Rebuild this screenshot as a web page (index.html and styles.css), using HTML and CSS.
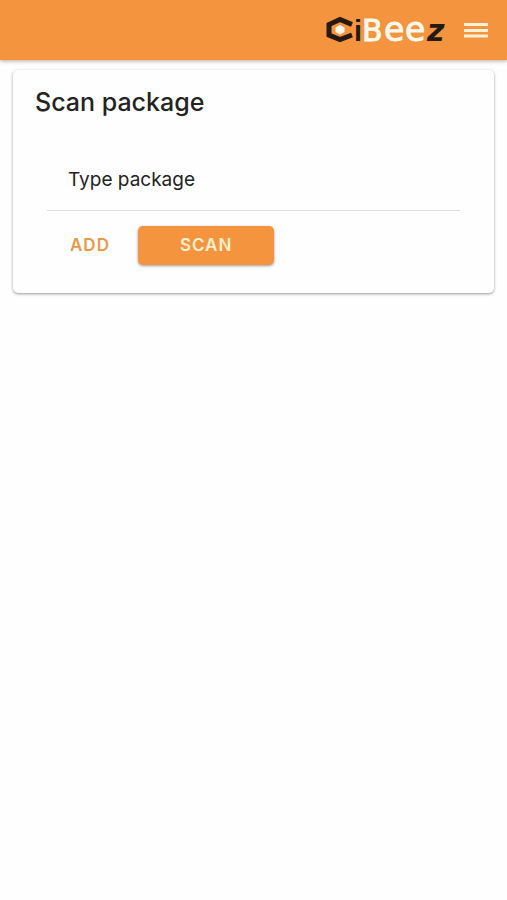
FILE: index.html
```html
<!DOCTYPE html>
<html lang="en">
<head>
  <meta charset="utf-8">
  <meta name="viewport" content="width=device-width, initial-scale=1">
  <title>CiBeez</title>
  <link rel="stylesheet" href="styles.css">
</head>
<body>
  <header class="toolbar">
    <a class="logo" href="#" aria-label="CiBeez">
      <svg class="logo-art" viewBox="0 0 120 32" aria-hidden="true">
        <path class="hex" d="M26 10.5 L14 5.5 L3 10.5 V21 L14 25.5 L26 21"/>
        <path class="cell" d="M14 11 L18.5 13.5 V18 L14 20.5 L9.5 18 V13.5 Z"/>
        <text class="dark narrow" x="28" y="27">i</text>
        <text class="light" x="36" y="27">B</text>
        <text class="light round" x="58" y="27">e</text>
        <text class="light round" x="79" y="27">e</text>
        <text class="dark slant" x="101" y="27">z</text>
      </svg>
    </a>
    <button class="menu" type="button" aria-label="Menu">
      <svg class="menu-art" viewBox="0 0 24 16" aria-hidden="true">
        <path d="M0 2.5H24M0 8.5H24M0 14H24"/>
      </svg>
    </button>
  </header>
  <main class="card">
    <h1 class="title">Scan package</h1>
    <form class="form">
      <input class="field" type="text" placeholder="Type package" aria-label="Type package">
      <div class="actions">
        <button class="button" type="button">ADD</button>
        <button class="button solid" type="button">SCAN</button>
      </div>
    </form>
  </main>
</body>
</html>
```
FILE: styles.css
```css
* {
  box-sizing: border-box;
}

body {
  margin: 0;
  background: #fefefe;
  color: #232323;
  font-family: Inter, "Liberation Sans", sans-serif;
}

.toolbar {
  display: flex;
  align-items: center;
  justify-content: flex-end;
  gap: 18px;
  height: 60px;
  padding: 0 19px;
  background: #f5943f;
  box-shadow: 0 1px 4px rgba(80, 30, 10, 0.4);
}

.logo,
.logo-art,
.menu-art {
  display: block;
}

.logo-art {
  width: 120px;
  height: 32px;
  overflow: visible;
  font-family: "DejaVu Sans", sans-serif;
  font-size: 30px;
}

.hex {
  fill: none;
  stroke: #241a10;
  stroke-width: 5;
}

.cell,
.light {
  fill: #fff8ea;
}

.light {
  stroke: #fff8ea;
  stroke-width: 1;
}

.round {
  font-size: 33px;
}

.dark {
  fill: #241a10;
  font-weight: bold;
}

.narrow {
  font-family: "Liberation Sans", sans-serif;
  font-size: 29px;
}

.slant {
  font-style: italic;
}

.menu {
  padding: 0;
  border: 0;
  background: none;
}

.menu-art {
  width: 24px;
  height: 16px;
  stroke: #fff0d8;
  stroke-width: 3;
}

.card {
  margin: 10px 13px;
  padding: 16px 34px 28px;
  border-radius: 5px;
  background: #fefefe;
  box-shadow: 0 1px 3px rgba(0, 0, 0, 0.4);
}

.title {
  margin: 0 0 36px -12px;
  font-size: 25px;
  line-height: 32px;
  font-weight: 500;
}

.field {
  display: block;
  width: 100%;
  height: 57px;
  padding: 0 21px 6px;
  border: 0;
  border-bottom: 1px solid #dedede;
  border-radius: 0;
  background: none;
  color: #232323;
  font: 19px Inter, "Liberation Sans", sans-serif;
}

.field::placeholder {
  color: #232323;
  opacity: 1;
}

.actions {
  display: flex;
  gap: 5px;
  padding-top: 15px;
}

.button {
  height: 39px;
  padding: 0 23px 2px;
  border: 0;
  border-radius: 5px;
  background: none;
  color: #e89a4c;
  font: 600 17px Inter, "Liberation Sans", sans-serif;
  letter-spacing: 1px;
}

.solid {
  padding: 0 42px 2px;
  background: #f5943f;
  color: #fff0d0;
  box-shadow: 0 1px 3px rgba(0, 0, 0, 0.4);
}
```
